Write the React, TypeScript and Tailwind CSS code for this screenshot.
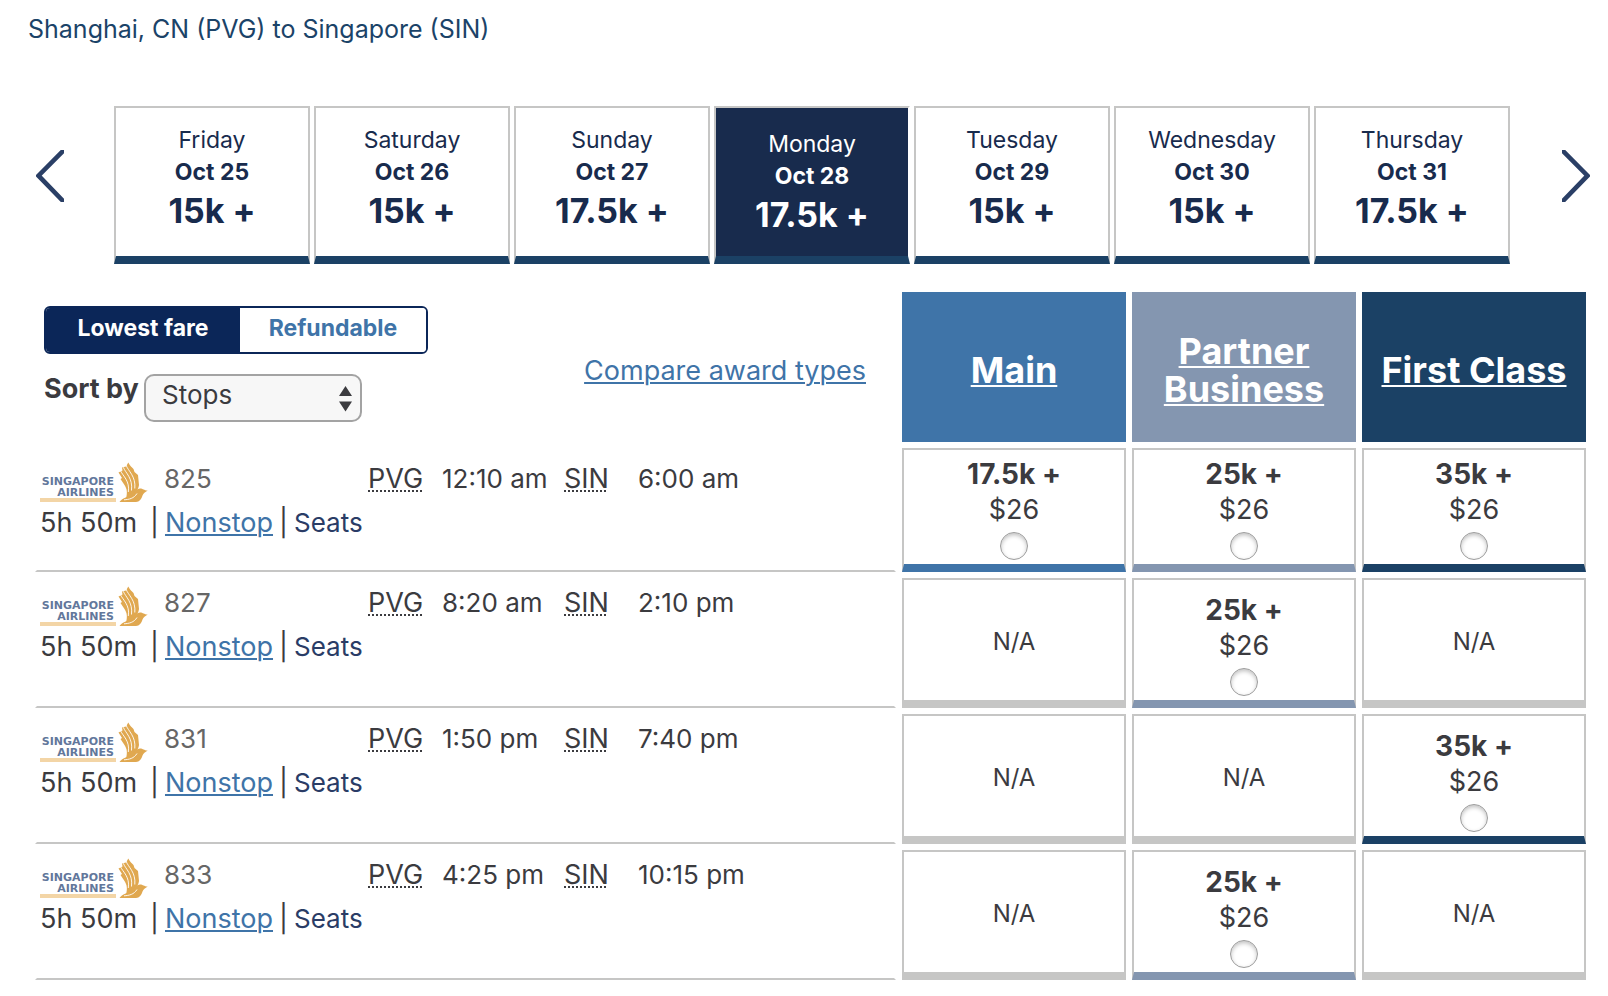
import { useState } from 'react';
import clsx from 'clsx';

const days = [
  { day: 'Friday', date: 'Oct 25', price: '15k +' },
  { day: 'Saturday', date: 'Oct 26', price: '15k +' },
  { day: 'Sunday', date: 'Oct 27', price: '17.5k +' },
  { day: 'Monday', date: 'Oct 28', price: '17.5k +' },
  { day: 'Tuesday', date: 'Oct 29', price: '15k +' },
  { day: 'Wednesday', date: 'Oct 30', price: '15k +' },
  { day: 'Thursday', date: 'Oct 31', price: '17.5k +' },
];

const cabins = [
  { name: 'Main', header: 'bg-[#3f74a8]', bar: 'border-b-[#3f74a8]' },
  { name: 'Partner Business', header: 'bg-[#8496b0]', bar: 'border-b-[#8496b0]' },
  { name: 'First Class', header: 'bg-[#1b4165]', bar: 'border-b-[#1b4165]' },
];

const flights = [
  { num: '825', depart: '12:10 am', arrive: '6:00 am', fares: ['17.5k +', '25k +', '35k +'] },
  { num: '827', depart: '8:20 am', arrive: '2:10 pm', fares: [null, '25k +', null] },
  { num: '831', depart: '1:50 pm', arrive: '7:40 pm', fares: [null, null, '35k +'] },
  { num: '833', depart: '4:25 pm', arrive: '10:15 pm', fares: [null, '25k +', null] },
];

const linkStyle = 'text-[#3f74a8] underline decoration-2 underline-offset-2';

function Chevron({ flip = false }: { flip?: boolean }) {
  return (
    <svg viewBox="0 0 28 52" className={clsx('h-[52px] w-7', flip && '-scale-x-100')} aria-hidden="true">
      <path d="M29 -1 L2.5 25.7 L29 53" fill="none" stroke="#2a3f66" strokeWidth="4.6" />
    </svg>
  );
}

function AirlineLogo() {
  return (
    <svg viewBox="0 0 108 44" className="h-11 w-[108px] overflow-visible" role="img" aria-label="Singapore Airlines">
      <g fill="#62779b" fontFamily="DejaVu Sans, sans-serif" fontWeight="700" fontSize="11" textAnchor="end">
        <text x="74" y="28">SINGAPORE</text>
        <text x="74" y="39">AIRLINES</text>
      </g>
      <rect x="0" y="41" width="76" height="4" fill="#f3d5a6" />
      {/* Bird: wing feathers, then head and base */}
      <g fill="#e0a850">
        <path d="M88.3 5.5 C90 9 92 10.500 93.500 12 L94.500 15 L98 18 L99 28 C98.500 34 92 38 86 42 C87.500 35 87 32 84.500 28 L80.500 22 L82 21 L78.500 15.500 L82.500 13.500 L82 10.500 L86 9.500 Z" />
        <path d="M79.500 45 C82 41 88 40 92 37 C95 34.500 97 31.500 100 31.500 C103 31.500 104 33.500 107.700 33.500 C105 35.500 103.500 36 102.500 38.500 C101.500 42 99.500 45 96 45 Z" />
      </g>
      <g fill="none" stroke="#fff" strokeWidth="0.900">
        <path d="M80.500 13.800 C83 19 90 24 88.300 35" />
        <path d="M83.300 10.300 C85.500 16 93 21 91.500 33.500" />
        <path d="M86 8 C88 14 96 19 94.800 31.500" />
        <path d="M84 42.800 C89 42.500 94 41.500 97 36.500" />
      </g>
    </svg>
  );
}

function DayPicker() {
  const [selected, setSelected] = useState(3);

  return (
    <nav aria-label="Travel dates" className="flex items-start pl-9 pr-[18px]">
      <button type="button" aria-label="Previous week" className="mr-[50px] mt-11">
        <Chevron />
      </button>
      <div className="grid flex-1 grid-cols-7 gap-1">
        {days.map((d, i) => (
          <button
            key={d.date}
            type="button"
            aria-pressed={i === selected}
            onClick={() => setSelected(i)}
            className={clsx(
              'flex flex-col items-center border-2 border-b-8 border-[#c6c6c5] border-b-[#1b4165] text-[23px] leading-8',
              i === selected
                ? 'border-r-white bg-[#182b4d] pb-[18px] pt-5 text-white'
                : 'bg-white pb-[22px] pt-4 text-[#182b4d]',
            )}
          >
            <span>{d.day}</span>
            <span className="font-bold">{d.date}</span>
            <span className="text-[34px] font-bold leading-[46px]">{d.price}</span>
          </button>
        ))}
      </div>
      <button type="button" aria-label="Next week" className="ml-[52px] mt-11">
        <Chevron flip />
      </button>
    </nav>
  );
}

function FareToggle() {
  const [refundable, setRefundable] = useState(false);
  const on = 'bg-[#0b2658] text-white';
  const off = 'bg-white text-[#3f74a8]';

  return (
    <div className="grid h-12 w-96 grid-cols-[194px_1fr] overflow-hidden rounded-md border-2 border-[#0b2658] text-[23px] font-bold">
      <button
        type="button"
        aria-pressed={!refundable}
        onClick={() => setRefundable(false)}
        className={clsx('pb-1', refundable ? off : on)}
      >
        Lowest fare
      </button>
      <button
        type="button"
        aria-pressed={refundable}
        onClick={() => setRefundable(true)}
        className={clsx('pb-1', refundable ? on : off)}
      >
        Refundable
      </button>
    </div>
  );
}

function SortBy() {
  return (
    <div className="flex items-start">
      <label htmlFor="sort" className="w-[100px] text-[27px] font-bold leading-[30px]">
        Sort by
      </label>
      <div className="relative">
        <select
          id="sort"
          className="h-12 w-[218px] appearance-none rounded-[10px] border-2 border-[#a3a3a3] bg-[#f7f7f7] pb-[6px] pl-4 text-[26px] leading-8"
        >
          <option>Stops</option>
          <option>Price</option>
          <option>Duration</option>
        </select>
        <svg viewBox="0 0 13 26" className="pointer-events-none absolute right-2.5 top-3 h-[26px] w-[13px]" aria-hidden="true">
          <path d="M6.5 0 L13 10 H0 Z M0 15.500 H13 L6.500 25.500 Z" fill="#3b3b3f" />
        </svg>
      </div>
    </div>
  );
}

export default function App() {
  return (
    <main className="bg-white font-['Inter',sans-serif] text-[#3b3b3f]">
      <h1 className="mb-[60px] pl-7 pt-3 text-[25px] leading-[34px] text-[#1b4368]">
        Shanghai, CN (PVG) to Singapore (SIN)
      </h1>

      <DayPicker />

      <div className="mt-[22px] pl-[29px] pr-4">
        <table className="w-full table-fixed border-separate border-spacing-[6px]">
          <colgroup>
            <col />
            <col className="w-56" />
            <col className="w-56" />
            <col className="w-56" />
          </colgroup>

          <thead>
            <tr className="h-[150px]">
              <td className="align-top">
                <div className="flex items-center justify-between pl-[9px] pr-[30px] pt-[14px]">
                  <div className="flex flex-col gap-5">
                    <FareToggle />
                    <SortBy />
                  </div>
                  <a href="#award-types" className={clsx('pt-[14px] text-[27px] leading-8', linkStyle)}>
                    Compare award types
                  </a>
                </div>
              </td>
              {cabins.map((c) => (
                <th
                  key={c.name}
                  scope="col"
                  className={clsx('px-3 pt-[6px] text-center align-middle text-[36px] font-bold leading-[38px] text-white', c.header)}
                >
                  <a href="#award-types" className="underline decoration-2 underline-offset-2">
                    {c.name}
                  </a>
                </th>
              ))}
            </tr>
          </thead>

          <tbody>
            {flights.map((f) => (
              <tr key={f.num} className="group h-[130px] first:h-[124px]">
                <td className="border-x-2 border-b-2 border-x-transparent border-b-[#c6c6c5] pl-[3px] pt-[3px] align-top text-[27px] leading-[44px] group-first:pt-[9px]">
                  <div className="grid grid-cols-[124px_204px_74px_122px_74px_auto]">
                    <AirlineLogo />
                    <span className="text-[26px] text-[#666]">{f.num}</span>
                    <span>
                      <abbr title="Shanghai Pudong" className="underline decoration-dotted decoration-2 underline-offset-2">PVG</abbr>
                    </span>
                    <span className="text-[26px]">{f.depart}</span>
                    <span>
                      <abbr title="Singapore Changi" className="underline decoration-dotted decoration-2 underline-offset-2">SIN</abbr>
                    </span>
                    <span className="text-[26px]">{f.arrive}</span>
                  </div>
                  <div className="flex gap-[6px]">
                    <span className="w-[104px]">5h 50m</span>
                    <span>|</span>
                    <a href="#details" className={linkStyle}>Nonstop</a>
                    <span>|</span>
                    <a href="#seats" className="text-[26px] text-[#2a3c66]">Seats</a>
                  </div>
                </td>
                {f.fares.map((fare, i) =>
                  fare ? (
                    <td
                      key={cabins[i].name}
                      className={clsx('border-2 border-b-8 border-[#c6c6c5] pb-1 align-bottom', cabins[i].bar)}
                    >
                      <label className="flex flex-col items-center leading-9">
                        <span className="text-[28px] font-bold">{fare}</span>
                        <span className="text-[27px]">$26</span>
                        <input
                          type="radio"
                          name="fare"
                          className="mt-1 h-7 w-7 appearance-none rounded-full border border-[#9c9c9c] bg-white shadow-[inset_0_2px_4px_rgba(0,0,0,0.25)] checked:bg-[#3f74a8]"
                        />
                      </label>
                    </td>
                  ) : (
                    <td
                      key={cabins[i].name}
                      className="border-2 border-b-8 border-[#c6c6c5] pt-1 text-center align-middle text-[24px]"
                    >
                      N/A
                    </td>
                  ),
                )}
              </tr>
            ))}
          </tbody>
        </table>
      </div>
    </main>
  );
}
